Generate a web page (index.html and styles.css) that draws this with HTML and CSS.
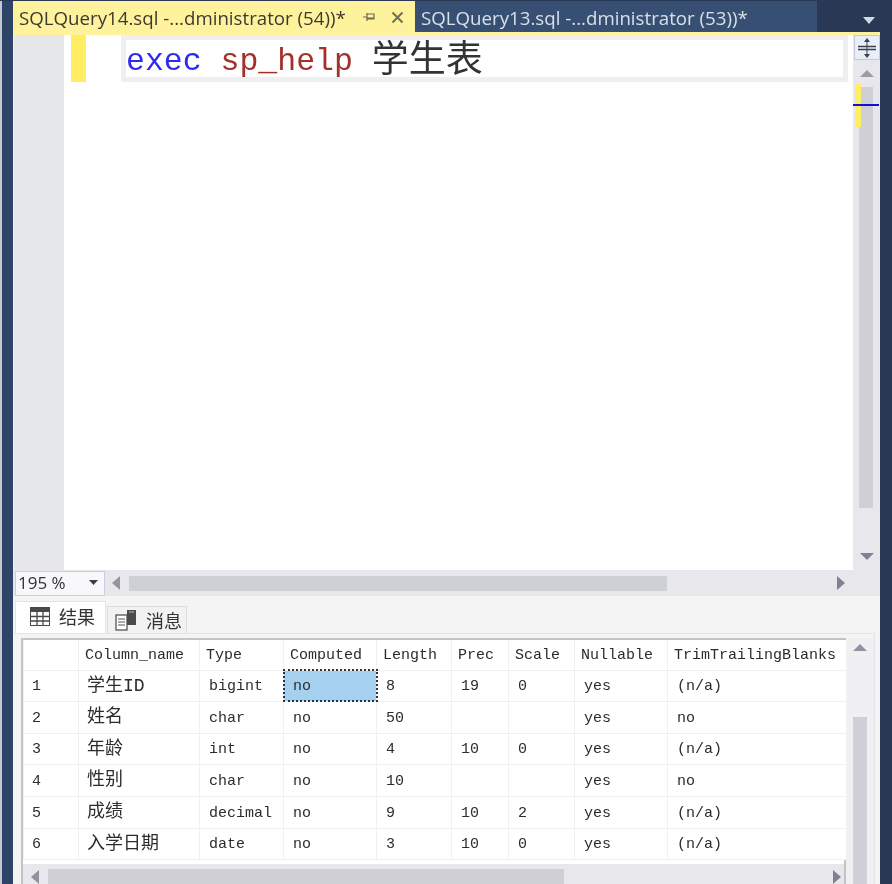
FILE: index.html
```html
<!DOCTYPE html>
<html lang="zh-CN">
<head>
<meta charset="utf-8">
<title>SQLQuery14.sql</title>
<link rel="stylesheet" href="styles.css">
</head>
<body>
<div class="app">
  <div class="edge"></div>
  <div class="main">
    <div class="tabstrip">
      <div class="doc-tab active">
        <span class="doc-title">SQLQuery14.sql -...dministrator (54))*</span>
        <svg class="pin" width="12" height="12" viewBox="0 0 12 12"><path d="M0 6h4M4 2v8M4 3h7v5H4M4 7h7" fill="none" stroke="#6b6a55" stroke-width="1.2"/></svg>
        <svg class="close" width="13" height="13" viewBox="0 0 13 13"><path d="M1.5 1.5l10 10M11.500 1.500l-10 10" fill="none" stroke="#6f6e5a" stroke-width="2"/></svg>
      </div>
      <div class="doc-tab inactive"><span class="doc-title">SQLQuery13.sql -...dministrator (53))*</span></div>
      <div class="tab-menu"><svg width="12" height="7" viewBox="0 0 12 7"><path d="M0 0h12L6 7z" fill="#d4dae4"/></svg></div>
    </div>
    <div class="accent-line"></div>

    <div class="editor">
      <div class="gutter"></div>
      <div class="code">
        <div class="change-mark"></div>
        <div class="current-line"><span class="kw">exec</span> <span class="proc">sp_help</span> <span class="ident">学生表</span></div>
      </div>
      <div class="vscroll">
        <div class="splitter">
          <svg width="18" height="20" viewBox="0 0 18 20"><path d="M9 0L6 4h6zM9 20l-3-4h6z" fill="#3c3f48"/><path d="M9 3v14" stroke="#3c3f48"/><path d="M0 8.500h18M0 11.500h18" stroke="#3c3f48" stroke-width="1.4"/></svg>
        </div>
        <svg class="arrow-up" width="14" height="7" viewBox="0 0 14 7"><path d="M7 0l7 7H0z" fill="#9a9da9"/></svg>
        <div class="vtrack">
          <div class="vthumb"></div>
          <div class="mark-yellow"></div>
          <div class="mark-caret"></div>
        </div>
        <svg class="arrow-down" width="14" height="7" viewBox="0 0 14 7"><path d="M0 0h14L7 7z" fill="#7f8391"/></svg>
      </div>
    </div>

    <div class="statusbar">
      <div class="zoom-box"><span>195 %</span><svg width="9" height="5" viewBox="0 0 9 5"><path d="M0 0h9L4.500 5z" fill="#3c3f48"/></svg></div>
      <svg class="h-left" width="8" height="14" viewBox="0 0 8 14"><path d="M8 0v14L0 7z" fill="#9296a3"/></svg>
      <div class="hthumb"></div>
      <svg class="h-right" width="8" height="14" viewBox="0 0 8 14"><path d="M0 0v14l8-7z" fill="#7f8391"/></svg>
    </div>

    <div class="results">
      <div class="result-tabs">
        <div class="result-tab selected">
          <svg width="20" height="19" viewBox="0 0 20 19"><rect x="0.500" y="0.500" width="19" height="18" fill="#fff" stroke="#4a4a4a"/><path d="M0 1h20v4H0z" fill="#4a4a4a"/><path d="M7 0v19M13 0v19M0 9.500h20M0 14h20" stroke="#4a4a4a" stroke-width="1.300"/></svg>
          <span>结果</span>
        </div>
        <div class="result-tab">
          <svg width="22" height="22" viewBox="0 0 22 22"><rect x="1" y="6" width="11" height="15" fill="#fff" stroke="#555" stroke-width="1.300"/><path d="M3 10h7M3 13h7M3 16h7" stroke="#555"/><path d="M12 1h9v15h-9z" fill="#4a4a4a"/><path d="M14 3h5" stroke="#bbb"/></svg>
          <span>消息</span>
        </div>
      </div>
      <div class="grid-panel">
        <div class="grid-area">
          <table class="grid">
            <colgroup>
              <col class="c0"><col class="c1"><col class="c2"><col class="c3"><col class="c4"><col class="c5"><col class="c6"><col class="c7"><col class="c8">
            </colgroup>
            <thead>
              <tr><th></th><th>Column_name</th><th>Type</th><th>Computed</th><th>Length</th><th>Prec</th><th>Scale</th><th>Nullable</th><th>TrimTrailingBlanks</th></tr>
            </thead>
            <tbody>
              <tr><td class="num">1</td><td class="name">学生ID</td><td>bigint</td><td class="focus">no</td><td>8</td><td>19</td><td>0</td><td>yes</td><td>(n/a)</td></tr>
              <tr class="tall"><td class="num">2</td><td class="name">姓名</td><td>char</td><td>no</td><td>50</td><td></td><td></td><td>yes</td><td>no</td></tr>
              <tr><td class="num">3</td><td class="name">年龄</td><td>int</td><td>no</td><td>4</td><td>10</td><td>0</td><td>yes</td><td>(n/a)</td></tr>
              <tr class="tall"><td class="num">4</td><td class="name">性别</td><td>char</td><td>no</td><td>10</td><td></td><td></td><td>yes</td><td>no</td></tr>
              <tr class="tall"><td class="num">5</td><td class="name">成绩</td><td>decimal</td><td>no</td><td>9</td><td>10</td><td>2</td><td>yes</td><td>(n/a)</td></tr>
              <tr><td class="num">6</td><td class="name">入学日期</td><td>date</td><td>no</td><td>3</td><td>10</td><td>0</td><td>yes</td><td>(n/a)</td></tr>
            </tbody>
          </table>
          <div class="grid-hscroll">
            <svg width="8" height="14" viewBox="0 0 8 14"><path d="M8 0v14L0 7z" fill="#8f93a0"/></svg>
            <div class="grid-hthumb"></div>
            <svg width="8" height="14" viewBox="0 0 8 14"><path d="M0 0v14l8-7z" fill="#7f8391"/></svg>
          </div>
        </div>
        <div class="grid-vscroll">
          <svg width="14" height="7" viewBox="0 0 14 7"><path d="M7 0l7 7H0z" fill="#8f93a0"/></svg>
          <div class="grid-vthumb"></div>
        </div>
      </div>
    </div>
  </div>
</div>
</body>
</html>
```
FILE: styles.css
```css
* { box-sizing: border-box; }
html, body { margin: 0; height: 100%; overflow: hidden; }
body { background: #293955; }
.app {
  display: flex;
  width: 892px;
  height: 884px;
  background: #293955;
  filter: blur(0.5px);
}
.edge { width: 13px; border-left: 2px solid #c5c9d2; background: #2f4568; margin-top: 1px; }
.main { width: 867px; display: flex; flex-direction: column; }

.tabstrip { display: flex; height: 32px; padding-top: 1px; }
.doc-tab {
  width: 402px;
  display: flex;
  align-items: center;
  padding-left: 6px;
  font: 18.7px "Open Sans", "Liberation Sans", sans-serif;
  white-space: nowrap;
}
.active { background: #fff29d; color: #3a3a30; }
.inactive { background: #364f72; color: #d8e0ea; }
.doc-title { width: 344px; padding-top: 2px; }
.pin { margin-top: 1px; }
.close { margin-left: 16px; margin-top: 1px; }
.tab-menu { flex: 1; display: flex; justify-content: flex-end; align-items: center; padding-right: 5px; padding-top: 8px; }
.accent-line { height: 3px; background: #fff29d; }

.editor { display: flex; height: 535px; background: #fff; }
.gutter { width: 51px; background: #e6e7e8; border-left: 1px solid #f3f3f5; }
.code { flex: 1; display: flex; align-items: flex-start; gap: 35px; padding-left: 7px; background: #fff; }
.change-mark { width: 15px; height: 47px; background: #ffee62; }
.current-line {
  width: 727px;
  height: 47px;
  border: 5px solid #efeff1;
  background: #fff;
  font: 31.5px/44px "Liberation Mono", "Noto Sans CJK SC", monospace;
  white-space: nowrap;
  overflow: hidden;
}
.kw { color: #2c2cf0; }
.proc { color: #a3312a; }
.ident { color: #333; font-size: 37px; vertical-align: -2px; }

.vscroll {
  width: 27px;
  display: flex;
  flex-direction: column;
  align-items: center;
  background: #e8e8ec;
}
.splitter {
  width: 26px;
  height: 25px;
  display: flex;
  align-items: center;
  justify-content: center;
  background: #e8eefa;
  border: 1px solid #c4cbd8;
}
.arrow-up { margin-top: 10px; }
.vtrack { position: relative; width: 100%; margin-top: 10px; flex: 1; }
.vthumb { width: 14px; height: 421px; margin-left: 6px; background: #cfd0d5; }
.mark-yellow { position: absolute; left: 2px; top: -3px; width: 6px; height: 43px; background: #ffee62; }
.mark-caret { position: absolute; left: 0; right: 1px; top: 17px; height: 2px; background: #1010d8; }
.arrow-down { margin-bottom: 10px; }

.statusbar {
  display: flex;
  align-items: center;
  height: 26px;
  background: #e8e8ec;
  padding-left: 2px;
}
.zoom-box {
  width: 90px;
  height: 25px;
  display: flex;
  align-items: center;
  justify-content: space-between;
  padding: 0 6px 2px 2px;
  background: #f8f8fb;
  border: 1px solid #c8d0e0;
  font: 17px "Open Sans", "Liberation Sans", sans-serif;
  color: #333;
}
.h-left { margin-left: 7px; }
.hthumb { width: 538px; height: 15px; margin-left: 9px; background: #cfd0d5; }
.h-right { margin-left: 170px; }

.results { flex: 1; display: flex; flex-direction: column; background: #f4f4f5; padding-left: 2px; min-height: 0; }
.result-tabs { display: flex; align-items: flex-end; height: 37px; gap: 1px; }
.result-tab {
  width: 80px;
  height: 27px;
  display: flex;
  align-items: center;
  gap: 9px;
  padding-left: 7px;
  background: #f2f2f3;
  border: 1px solid #dcdcdf;
  border-bottom: 0;
  font: 18px "Noto Sans CJK SC", sans-serif;
  color: #333;
}
.selected { width: 91px; height: 32px; gap: 9px; padding: 0 0 3px 14px; background: #fff; border-color: #e4e4e6; }
.grid-panel {
  flex: 1;
  display: flex;
  min-height: 0;
  width: 860px;
  padding: 4px 0 0 6px;
  border-top: 1px solid #e4e4e6;
  border-right: 1px solid #e4e4e6;
}
.grid-area { width: 825px; display: flex; flex-direction: column; border: solid #c4c4c8; border-width: 2px 2px 0 2px; background: #fff; }
.grid { table-layout: fixed; width: 823px; border-collapse: collapse; background: #fff; }
.c0 { width: 55px; }
.c1 { width: 121px; }
.c2 { width: 84px; }
.c3 { width: 93px; }
.c4 { width: 75px; }
.c5 { width: 57px; }
.c6 { width: 66px; }
.c7 { width: 93px; }
.c8 { width: 179px; }
.grid th, .grid td {
  height: 31px;
  padding: 2px 0 0 9px;
  border: 1px solid #f0f0f1;
  font: 15px "Liberation Mono", "Noto Sans CJK SC", monospace;
  color: #2c2c2c;
  text-align: left;
  white-space: nowrap;
  overflow: hidden;
}
.grid th { height: 30px; padding: 2px 0 0 6px; border-top: 0; font-weight: normal; }
.grid td.name { font-size: 18px; line-height: 18px; padding: 0 0 0 8px; }
.grid .tall td { height: 32px; }
.grid td.num { padding-left: 8px; }
.grid td.focus { background: #a6d0f0; outline: 2px dotted #2a3440; outline-offset: -1px; }
.grid-hscroll {
  flex: 1;
  margin-top: 4px;
  display: flex;
  align-items: flex-end;
  gap: 9px;
  padding-left: 8px;
  background: #e8e8ec;
}
.grid-hthumb { width: 516px; height: 15px; background: #cfd0d5; }
.grid-hscroll svg:last-child { margin-left: 260px; }
.grid-vscroll {
  width: 28px;
  display: flex;
  flex-direction: column;
  align-items: flex-start;
  padding: 6px 0 0 7px;
  background: #f0f0f2;
}
.grid-vthumb { width: 14px; flex: 1; margin-top: 66px; background: #cfd0d5; }
```
